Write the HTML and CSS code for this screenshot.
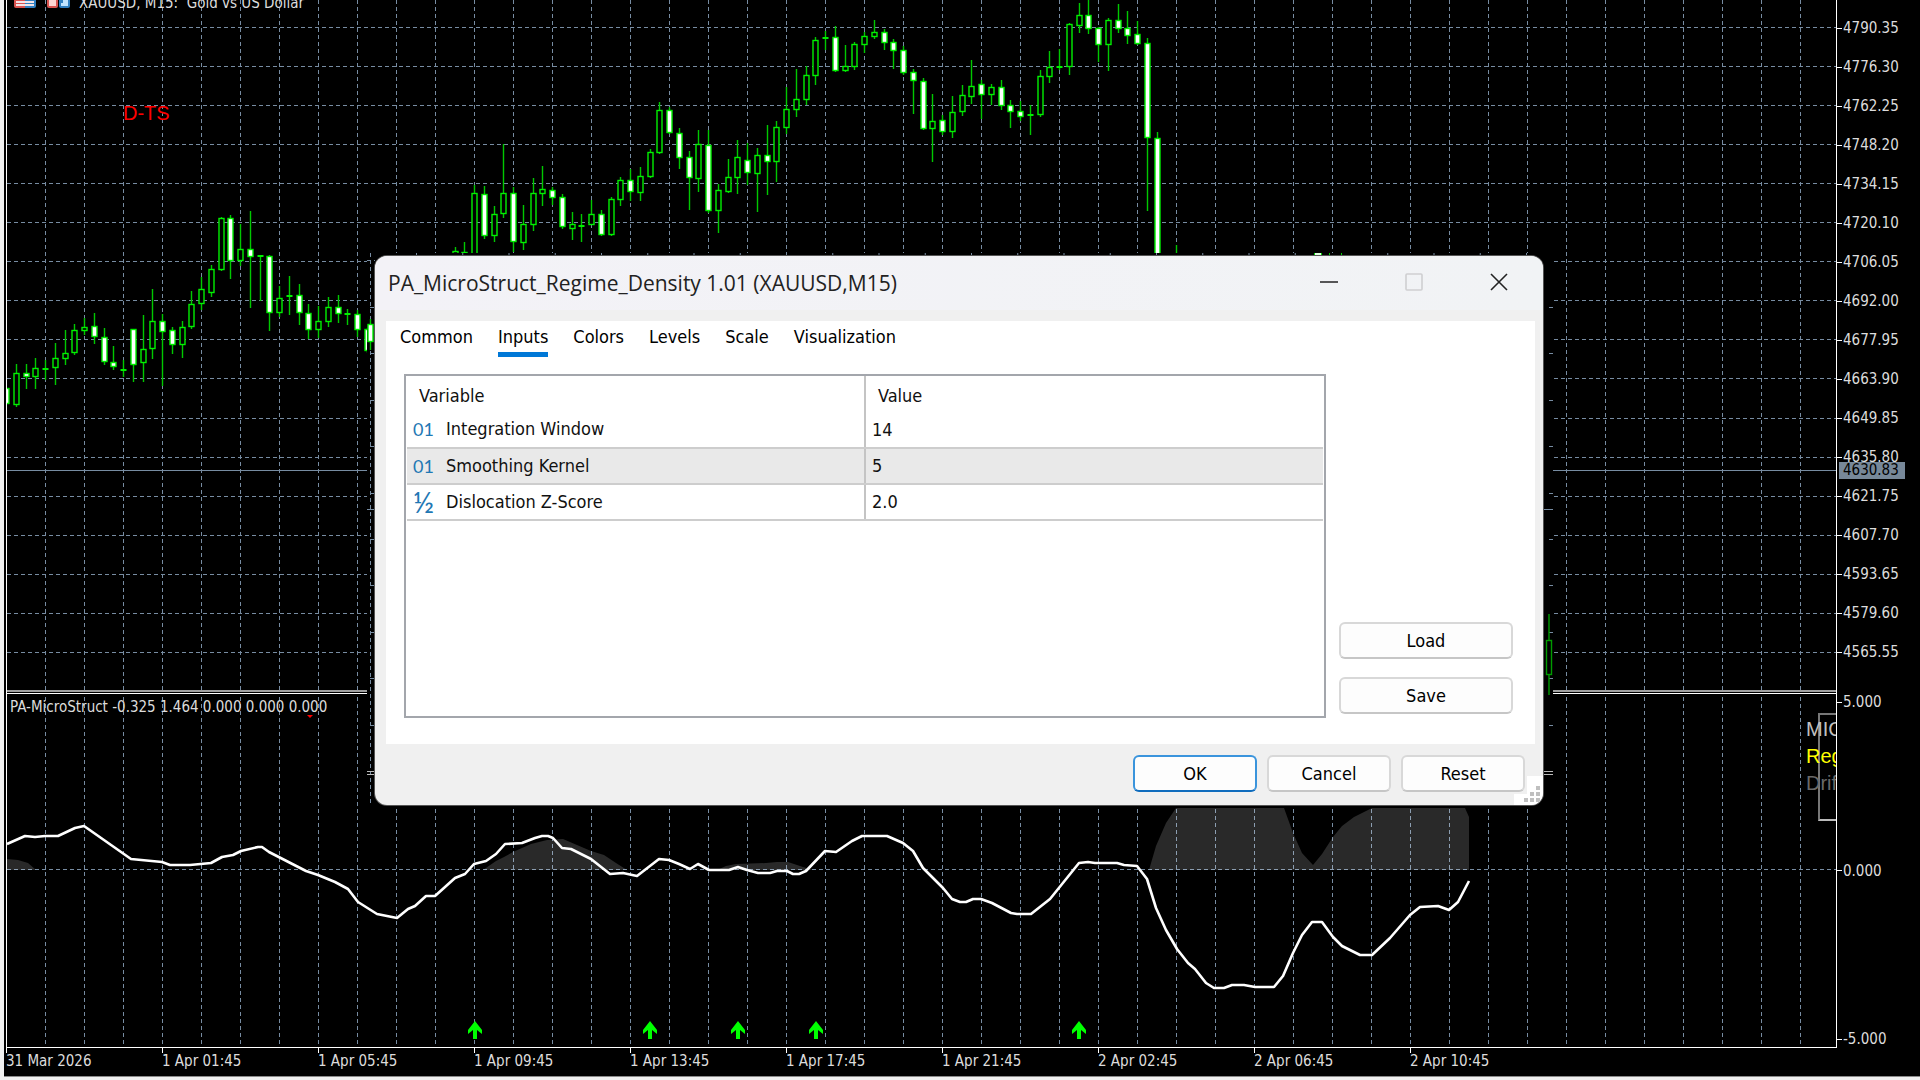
FILE: index.html
```html
<!DOCTYPE html>
<html lang="en">
<head>
    <meta charset="UTF-8">
    <meta name="viewport" content="width=device-width, initial-scale=1.0">
    <title>XAUUSD, M15: Gold vs US Dollar</title>
    <link rel="stylesheet" href="styles.css">
</head>
<body>
    <main class="chart-window">
        <div class="plots">
            <svg class="plot" id="plot"></svg>
            <div class="chart-title">
                <svg width="56" height="9" viewBox="0 0 56 9">
                    <path d="M0 0h11v9H2q-2 0-2-2z" fill="#d9534f"/>
                    <path d="M11 0h11v7q0 2-2 2h-9z" fill="#2f7fc1"/>
                    <path d="M2 3h18M2 6h18" stroke="#f3e4e8" stroke-width="2"/>
                    <path d="M33 0h11v7q0 2-2 2h-7q-2 0-2-2z" fill="#d9534f"/>
                    <path d="M35 0h7v7h-7z" fill="#fbd5d2"/>
                    <path d="M45 0h11v7q0 2-2 2h-7q-2 0-2-2z" fill="#2f7fc1"/>
                    <path d="M47 0h7v7h-7z" fill="#bfe3ff"/>
                    <path d="M45 0h4v4h-4z" fill="#2f7fc1"/>
                </svg>
                <span>XAUUSD, M15:&nbsp; Gold vs US Dollar</span>
            </div>
            <div class="label-dts">D-TS</div>
            <div class="indicator-title">PA-MicroStruct -0.325 1.464 0.000 0.000 0.000</div>
            <div class="info-box">
                <div class="info-head">MICROSTRUCT</div>
                <div class="info-regime">Regime</div>
                <div class="info-drift">Drift</div>
            </div>
        </div>
        <div class="price-axis">
            <div class="prices" id="prices"></div>
            <div class="levels"><span>5.000</span><span>0.000</span><span>-5.000</span></div>
            <div class="current-price">4630.83</div>
        </div>
        <div class="time-axis" id="times"></div>
    </main>

    <section class="dialog">
        <header class="titlebar">
            <h1>PA_MicroStruct_Regime_Density 1.01 (XAUUSD,M15)</h1>
            <div class="window-buttons">
                <button aria-label="Minimize"><svg width="18" height="18" viewBox="0 0 18 18"><path d="M0 9h18" stroke="#222" stroke-width="1.6"/></svg></button>
                <button aria-label="Maximize" disabled><svg width="18" height="18" viewBox="0 0 18 18"><rect x="1" y="1" width="16" height="16" rx="1" fill="none" stroke="#cfcfd1" stroke-width="1.6"/></svg></button>
                <button aria-label="Close"><svg width="18" height="18" viewBox="0 0 18 18"><path d="M1 1l16 16M17 1L1 17" stroke="#222" stroke-width="1.6"/></svg></button>
            </div>
        </header>
        <div class="panel">
            <nav class="tabs">
                <button>Common</button>
                <button class="active">Inputs</button>
                <button>Colors</button>
                <button>Levels</button>
                <button>Scale</button>
                <button>Visualization</button>
            </nav>
            <div class="panel-body">
                <div class="table-box">
                    <table>
                        <thead>
                            <tr><th>Variable</th><th>Value</th></tr>
                        </thead>
                        <tbody>
                            <tr><td><span class="type">01</span>Integration Window</td><td>14</td></tr>
                            <tr class="selected"><td><span class="type">01</span>Smoothing Kernel</td><td>5</td></tr>
                            <tr><td><span class="type half">½</span>Dislocation Z-Score</td><td>2.0</td></tr>
                        </tbody>
                    </table>
                </div>
                <div class="side-buttons">
                    <button class="btn">Load</button>
                    <button class="btn">Save</button>
                </div>
            </div>
        </div>
        <footer class="footer">
            <button class="btn primary">OK</button>
            <button class="btn">Cancel</button>
            <button class="btn">Reset</button>
        </footer>
        <svg class="grip" width="29" height="29" viewBox="0 0 29 29">
            <path d="M13 0H29V29H0V18H13Z" fill="#fff"/>
            <path d="M22 10h4v4h-4zM16 16h4v4h-4zM22 16h4v4h-4zM10 22h4v4h-4zM16 22h4v4h-4zM22 22h4v4h-4z" fill="#bfbfbf"/>
        </svg>
    </section>

    <script>
        // high, body top, body bottom, low, filled
        const candles = [
            [388,388,404,404,1],[364,373,405,407,0],[364,373,377,389,1],[358,368,377,389,0],[360,368,369,380,0],
            [343,358,368,385,0],[330,353,359,365,0],[324,330,353,355,0],[318,327,331,335,0],[313,326,337,344,1],
            [328,337,362,365,1],[346,362,367,370,1],[360,369,370,377,0],[329,329,365,382,1],[315,349,363,382,0],
            [289,321,349,359,0],[314,321,332,386,1],[327,330,345,354,1],[321,327,345,358,0],[291,304,327,329,0],
            [277,289,304,310,0],[265,269,293,297,0],[217,218,270,271,0],[215,218,261,279,1],[224,249,261,266,0],
            [211,249,257,308,1],[255,255,257,301,0],[255,256,313,331,1],[286,298,313,317,0],[276,295,297,315,0],
            [284,295,313,325,1],[304,313,330,339,1],[306,321,330,338,0],[297,307,322,327,0],[295,307,314,323,1],
            [309,313,315,325,0],[310,314,330,337,1],[328,329,351,353,1],null,null,
            null,null,null,null,null,
            null,[247,251,270,270,0],[242,252,270,270,0],[185,193,270,270,0],[186,194,236,239,1],
            [206,214,236,242,0],[144,193,214,218,0],[187,193,242,252,1],[205,224,243,250,0],[178,193,225,231,0],
            [166,189,194,206,0],[187,190,198,205,1],[194,197,227,229,1],[212,224,229,240,0],[214,225,226,242,0],
            [200,214,225,225,0],[210,214,235,236,1],[197,199,235,236,0],[177,180,200,206,0],[169,180,192,201,1],
            [167,176,193,201,0],[149,152,177,178,0],[102,110,153,154,0],[107,110,133,134,1],[128,133,158,169,1],
            [151,157,178,210,1],[130,144,179,192,0],[130,145,211,213,1],[184,190,211,233,0],[159,177,192,193,0],
            [140,157,178,194,0],[143,160,173,185,1],[148,155,174,212,0],[125,155,162,195,1],[121,127,162,182,0],
            [87,109,128,134,0],[69,99,110,117,0],[66,75,100,105,0],[37,40,76,85,0],[31,37,39,50,0],
            [26,37,71,72,1],[45,66,71,72,0],[42,44,67,70,0],[32,36,45,53,0],[20,32,37,39,0],
            [29,32,43,50,1],[39,42,51,69,1],[46,50,73,75,1],[69,72,81,114,1],[78,81,129,130,1],
            [94,121,129,162,0],[115,120,132,135,1],[96,112,132,138,0],[85,95,112,116,0],[60,86,97,104,0],
            [80,84,95,119,1],[84,87,95,105,0],[80,87,106,110,1],[100,105,112,128,1],[101,111,117,121,1],
            [105,114,115,135,0],[70,76,115,117,0],[51,67,77,83,0],[49,66,68,70,0],[23,24,67,75,0],
            [3,15,26,33,0],[0,15,29,34,1],[27,28,45,62,1],[18,20,45,71,0],[4,20,29,33,1],
            [11,28,36,44,1],[21,34,44,45,1],[38,43,138,211,1],[132,138,270,270,1],null,
            [245,270,270,270,0]
        ];
        const gridRows = [27,66,105,144,183,222,261,300,339,378,418,457,496,535,574,613,652];
        const prices = ['4790.35','4776.30','4762.25','4748.20','4734.15','4720.10','4706.05','4692.00','4677.95','4663.90','4649.85','4635.80','4621.75','4607.70','4593.65','4579.60','4565.55'];
        const times = ['31 Mar 2026','1 Apr 01:45','1 Apr 05:45','1 Apr 09:45','1 Apr 13:45','1 Apr 17:45','1 Apr 21:45','2 Apr 02:45','2 Apr 06:45','2 Apr 10:45'];
        const drift = '7,844 25,836 35,837 45,836 58,836 75,828 84,826 131,859 162,862 170,865 190,865 211,863 222,857 233,855 241,851 258,847 262,847 269,852 306,871 318,875 335,882 348,889 358,902 377,914 397,918 408,909 415,906 426,896 435,896 455,878 465,874 474,864 486,861 496,854 505,844 522,843 535,838 542,836 548,836 553,838 562,848 571,849 591,859 610,874 623,873 637,876 659,859 669,860 679,864 690,869 698,864 709,870 729,870 738,867 747,870 758,873 770,873 777,871 787,871 793,874 799,874 806,871 825,851 836,852 852,841 862,836 887,836 903,843 913,851 923,868 943,888 952,899 960,902 966,902 973,899 981,899 992,903 1011,913 1017,914 1031,914 1050,899 1079,863 1088,862 1095,863 1117,863 1124,865 1137,866 1147,879 1156,908 1166,930 1177,949 1188,963 1195,969 1206,983 1214,988 1224,988 1232,985 1244,985 1255,987 1274,987 1283,976 1293,953 1302,935 1312,922 1322,922 1333,937 1342,946 1360,955 1372,955 1390,938 1410,915 1420,907 1438,906 1449,910 1458,902 1469,881';
        const density = [
            '7,859 18,860 28,863 36,870 7,870',
            '483,870 496,861 504,857 513,852 531,844 547,840 563,839 591,851 604,855 616,863 627,870',
            '717,870 726,866 736,864 766,863 777,862 788,862 797,865 803,867 813,870',
            '1149,870 1156,846 1166,823 1172,814 1176,808 1284,808 1293,833 1302,853 1313,865 1322,854 1333,837 1342,826 1354,817 1372,808 1465,808 1469,817 1469,870'
        ];
        const arrows = [475, 650, 738, 816, 1079];

        const plot = document.getElementById('plot');
        const right = plot.clientWidth + 7;
        let out = '';

        function line(x1, y1, x2, y2, cls) {
            out += `<path class="${cls}" d="M${x1} ${y1}L${x2} ${y2}"/>`;
        }

        function candle(x, c, cls) {
            const [high, top, bottom, low, filled] = c;
            out += `<g class="${cls}"><path d="M${x} ${high}V${top}M${x} ${bottom}V${low}"/>`;
            if (bottom - top < 3) {
                out += `<path class="doji" d="M${x - 3} ${top + 1}h6"/></g>`;
            } else {
                out += `<rect class="${filled ? 'down' : 'up'}" x="${x - 2.5}" y="${top + 0.5}" width="5" height="${bottom - top - 1}"/></g>`;
            }
        }

        function drawGrid() {
            for (let x = 45.5; x < right; x += 39) {
                line(x, 0, x, 690, 'grid');
                line(x, 697, x, 1047, 'grid');
            }
            gridRows.forEach(y => line(7, y + 0.5, right, y + 0.5, 'grid'));
            line(7, 869.5, right, 869.5, 'grid');
            line(7, 470.5, right, 470.5, 'price-line');
        }

        function drawSplitter() {
            out += `<rect x="7" y="690" width="${right - 7}" height="2" fill="#a0a0a0"/>`;
            out += `<rect x="7" y="693" width="${right - 7}" height="1" fill="#fff"/>`;
        }

        // older frame of the chart, left uncovered round the dialog
        function drawStale() {
            out += '<rect x="367" y="253" width="1186" height="555"/>';
            line(370.5, 253, 370.5, 804, 'grid');
            for (let y = 307; y < 740; y += 46.4) {
                line(370, Math.round(y) + 0.5, 375, Math.round(y) + 0.5, 'grid');
                line(1549, Math.round(y) + 0.5, 1553, Math.round(y) + 0.5, 'grid');
            }
            line(367, 260.5, 375, 260.5, 'grid');
            line(367, 509.5, 375, 509.5, 'price-line');
            line(1543, 509.5, 1553, 509.5, 'price-line');
            out += '<path d="M367 771.5h8M367 774.5h8M1543 771.5h10M1543 774.5h10" stroke="#bbb"/>';
            for (let x = 416.5; x < 1540; x += 46.25) {
                line(x, 253, x, 256, 'price-line');
            }
            out += '<path d="M1315 254.5h6" stroke="#dfd" stroke-width="3"/><path d="M1314.5 253v3M1321.5 253v3M1329.5 253v3M1341.5 253v3" stroke="#0c0"/>';
            candle(370.5, [319,324,342,350,1], 'candle');
            candle(1549, [614,640,675,695,0], 'candle dim');
        }

        drawGrid();
        density.forEach(p => out += `<polygon points="${p}" fill="#fff" fill-opacity="0.16"/>`);
        candles.forEach((c, i) => c && candle(Math.round(6 + i * 9.75) + 0.5, c, 'candle'));
        drawSplitter();
        out += `<polyline class="drift" points="${drift}"/>`;
        arrows.forEach(x => out += `<path class="arrow" d="M${x} 1021l7 9v4l-5-4v9h-4v-9l-5 4v-4z"/>`);
        out += '<path d="M307 715h6l-3 3z" fill="#f00"/>';
        drawStale();
        plot.innerHTML = `<g transform="translate(-7 0)">${out}</g>`;

        document.getElementById('prices').innerHTML = prices.map(p => `<span>${p}</span>`).join('');
        document.getElementById('times').innerHTML = times.map(t => `<span>${t}</span>`).join('');
    </script>
</body>
</html>
```
FILE: styles.css
```css
:root {
    --grid: #778ca2;
    --face: #f0f0f0;
    --ui: "DejaVu Sans Condensed", "DejaVu Sans", sans-serif;
}

* {
    box-sizing: border-box;
    margin: 0;
    padding: 0;
}

body {
    height: 100vh;
    padding: 0 0 3px 4px;
    overflow: hidden;
    position: relative;
    background: var(--face);
    font-family: var(--ui);
}

button {
    font: inherit;
    border: none;
    background: none;
}

.chart-window {
    height: 100%;
    display: grid;
    grid-template-columns: 1fr 83px;
    grid-template-rows: 1fr 29px;
    padding-left: 2px;
    background: #000;
    border-bottom: 1px solid #8a8a8a;
    color: #dcdcdc;
    font-size: 15px;
    line-height: 18px;
}

.plots {
    position: relative;
    overflow: hidden;
    border-left: 1px solid #fff;
    border-right: 1px solid #fff;
    border-bottom: 1px solid #fff;
}

.plot {
    display: block;
    width: 100%;
    height: 100%;
}

.grid {
    stroke: var(--grid);
    stroke-dasharray: 4 3;
    fill: none;
}

.price-line {
    stroke: var(--grid);
}

.candle path {
    stroke: #00c800;
    stroke-width: 1.4;
}

.candle rect {
    stroke: #00f000;
    stroke-width: 1.4;
    fill: #000;
}

.candle .down {
    fill: #fff;
}

.candle .doji {
    stroke: #00f000;
    stroke-width: 2;
}

.dim rect, .dim path {
    stroke: #009c00;
}

.drift {
    fill: none;
    stroke: #fff;
    stroke-width: 2.6;
    stroke-linejoin: round;
}

.arrow {
    fill: #00ff00;
}

.chart-title {
    position: absolute;
    top: -6px;
    left: 7px;
    display: flex;
    align-items: center;
    gap: 9px;
}

.label-dts {
    position: absolute;
    top: 101px;
    left: 116px;
    color: #f00;
    font: 20px/24px "Liberation Sans", sans-serif;
}

.indicator-title {
    position: absolute;
    top: 698px;
    left: 3px;
}

.info-box {
    position: absolute;
    top: 713px;
    left: calc(100% - 18px);
    width: 200px;
    height: 108px;
    padding-top: 1px;
    border: 2px solid #777;
    border-bottom-color: #bbb;
    font: 20px/27px "Liberation Sans", sans-serif;
}

.info-box div {
    margin-left: -14px;
}

.info-head {
    color: #c0c0c0;
}

.info-regime {
    color: #ff0;
}

.info-drift {
    color: #696969;
}

.price-axis {
    position: relative;
}

.prices {
    display: flex;
    flex-direction: column;
    justify-content: space-between;
    height: 642px;
    margin-top: 19px;
}

.prices span, .levels span {
    display: flex;
    align-items: center;
    gap: 1px;
}

.prices span::before, .levels span::before {
    content: "";
    width: 5px;
    height: 1px;
    background: #fff;
}

.levels {
    display: flex;
    flex-direction: column;
    justify-content: space-between;
    height: 355px;
    margin-top: 32px;
}

.current-price {
    position: absolute;
    top: 462px;
    left: 2px;
    width: 66px;
    padding-left: 4px;
    background: #778899;
    color: #000;
    line-height: 17px;
}

.time-axis {
    grid-column: 1 / -1;
    display: flex;
    overflow: hidden;
}

.time-axis span {
    flex: 0 0 156px;
    padding-top: 4px;
    white-space: nowrap;
    background: linear-gradient(#fff, #fff) 0 0 / 1px 5px no-repeat;
}

.dialog {
    position: absolute;
    top: 256px;
    left: 375px;
    width: 1168px;
    display: flex;
    flex-direction: column;
    padding: 0 8px 0 11px;
    background: var(--face);
    border-radius: 12px;
    overflow: hidden;
    box-shadow: 0 0 0 1px #555;
    color: #111;
    font-size: 18px;
    line-height: 22px;
}

.titlebar {
    display: flex;
    justify-content: space-between;
    height: 54px;
    margin: 0 -8px 11px -11px;
    padding-left: 13px;
    background: linear-gradient(90deg, #f3f2f7, #f1f3f5);
}

.titlebar h1 {
    font: 21px/54px "Open Sans", "Noto Sans", sans-serif;
    color: #222;
}

.window-buttons {
    display: flex;
    height: 52px;
    margin-right: 2px;
}

.window-buttons button {
    display: grid;
    place-items: center;
    width: 85px;
}

.panel {
    padding: 5px 22px 26px 14px;
    background: #fff;
}

.tabs {
    display: flex;
    gap: 25px;
    margin-bottom: 17px;
}

.tabs button {
    height: 31px;
    padding-bottom: 5px;
    border-bottom: 5px solid transparent;
    line-height: 22px;
}

.tabs .active {
    border-bottom-color: #0078d7;
}

.panel-body {
    display: flex;
    gap: 13px;
    margin-left: 4px;
}

.table-box {
    flex: 1;
    height: 344px;
    padding: 0 1px;
    border: 2px solid #a3a6ac;
}

table {
    width: 100%;
    border-collapse: collapse;
    table-layout: fixed;
}

th, td {
    height: 36px;
    text-align: left;
    font-weight: normal;
    border-bottom: 2px solid #cdcdcd;
}

th {
    padding: 3px 0 0 12px;
    border-bottom: none;
}

td {
    padding-left: 6px;
}

th:first-child, td:first-child {
    border-right: 2px solid #c4c4c4;
}

.selected {
    background: #e9e9e9;
}

.type {
    display: inline-block;
    width: 33px;
    height: 22px;
    vertical-align: middle;
    color: #1f78b4;
    font: 18px/20px Lato, sans-serif;
}

.half {
    font-size: 29px;
}

.side-buttons {
    display: flex;
    flex-direction: column;
    justify-content: flex-end;
    gap: 18px;
    width: 174px;
    padding-bottom: 4px;
}

.btn {
    height: 37px;
    background: #fdfdfd;
    border: 2px solid #d8d8d8;
    border-bottom-color: #c6c6c6;
    border-radius: 6px;
}

.btn.primary {
    border-color: #3a94dc;
    border-bottom-color: #0f6cbd;
}

.footer {
    display: flex;
    justify-content: flex-end;
    gap: 10px;
    padding: 11px 10px 13px;
}

.footer .btn {
    width: 124px;
}

.grip {
    position: absolute;
    right: 0;
    bottom: 0;
}
```
